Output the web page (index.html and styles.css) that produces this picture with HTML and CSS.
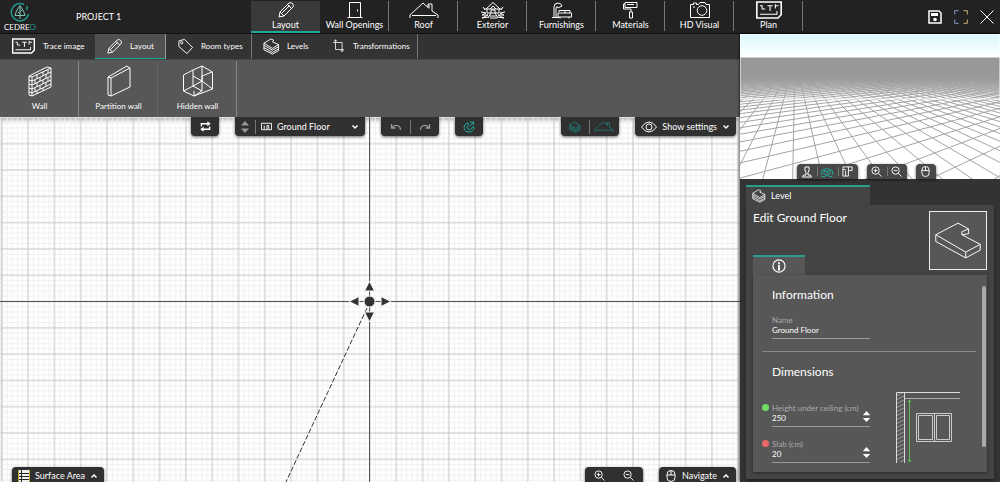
FILE: index.html
```html
<!DOCTYPE html>
<html lang="en">
<head>
<meta charset="utf-8">
<title>Project 1</title>
<link rel="stylesheet" href="styles.css">
</head>
<body>
<svg class="defs" aria-hidden="true">
  <symbol id="pencil" viewBox="0 0 18 18"><path d="M2 16l1-5L12 2q2-1 3.500 .5T16 6L7 15zM3 11l4 4M10.500 3.500l4 4M4.500 12.500l8-8"/></symbol>
  <symbol id="door" viewBox="0 0 18 18"><path d="M3.500 16.500v-15h11v15M1.500 16.500h15M11.500 8.500v2"/></symbol>
  <symbol id="roof" viewBox="0 0 30 18"><path d="M1 14L14 2l5 4.500V3h4v7l6 4M1 14v3M29 14v3M3 14.500h24M20 4v3.500"/></symbol>
  <symbol id="exterior" viewBox="0 0 26 18"><path d="M6 8L13 1.500 20 8M4 8h18M7 8v4h12V8M10 8l3-3 3 3M11 12V9h4v3M1 11l5 1-4 2 6 0-6 3 7-1M25 11l-5 1 4 2-6 0 6 3-7-1M11 12l-3 5M15 12l3 5M10 15h6M10 17h7M3 6l2 3M23 6l-2 3"/></symbol>
  <symbol id="lamp" viewBox="0 0 22 18"><path d="M1 16.500h7M3 16V6q0-4 4-4 3 0 4 3l-4 2q-1-3-2 0v9M8 11V9.500h11V12M7 12h13.500v4H7zM9 16v1.500M18 16v1.500M14 9.500V12"/></symbol>
  <symbol id="roller" viewBox="0 0 18 18"><path d="M3 1.500h12v5H3zM3 3H1.500v5H9v3M7.500 11h3v6h-3zM5 3.500h7"/></symbol>
  <symbol id="camera" viewBox="0 0 20 18"><path d="M.5 3.500h3V2h3v1.500h2L10 1.500h5l1 2h3.500v13H.5zM3 6h2"/><circle cx="12" cy="9.500" r="4.800"/></symbol>
  <symbol id="plan" viewBox="0 0 25 17"><path stroke-width="1.500" d="M1 1h23v12l-3 3H1z"/><path d="M4 4.500h2v3h3M4 12.500h16V9.500M11 4.500h5M13.500 4.500v5M18.500 3v4M21.500 4.500h-3"/></symbol>
  <symbol id="tag" viewBox="0 0 18 18"><path d="M2 3l6-1.500L16.500 10l-6 6.500L2 9z"/><circle cx="5" cy="5" r="1.200"/></symbol>
  <symbol id="levels" viewBox="0 0 18 18"><path d="M1 5.500L8.500 1l3 1.500L10 4l6.500 3L10 11zM1 5.500v7L10 17l6.500-3.500V7M1 7.800l9 5 6.500-3.500M1 10.200l9 5 6.500-3.500"/></symbol>
  <symbol id="crop" viewBox="0 0 18 18"><path d="M4.500 1v12.500H15M1.500 4.500H13V16M2.500 3l2-2 2 2M11 14.500l2 2 2-2"/></symbol>
  <symbol id="wall" viewBox="0 0 26 32"><path d="M2 11L20 2l4 1v19L5 31l-3-1zM2 11l3 1v19M5 12l19-9M5 16l19-9M5 20l19-9M5 24l19-9M5 28l19-9M2 15l3 1M2 19l3 1M2 23l3 1M2 27l3 1M10 10v4M16 7v4M21 5v3M8 15v4M13 12v4M19 9v4M10 18v4M16 15v4M21 13v3M8 23v4M13 20v4M19 17v4M10 26v3M16 23v3"/></symbol>
  <symbol id="partition" viewBox="0 0 26 32"><path d="M2 12L21 1l3 2v19L5 31l-3-1zM2 12l3 1v18M5 13L24 3"/></symbol>
  <symbol id="hidden" viewBox="0 0 32 32"><path d="M1.500 10L11 5v16l-9.500 5zM11 5l9-4 10.500 6v17L12 31M11 21l9-5V1M20 16l10.500 8M1.500 26L12 31V26M11 11l9 5M12 31l8-5V11l10-4M11 21l9 5"/></symbol>
  <symbol id="swap" viewBox="0 0 12 12"><path stroke-width="1.500" d="M1.500 6V3H10M8 1l2.500 2L8 5M10.500 6v3H2M4 7L1.500 9 4 11"/></symbol>
  <symbol id="floor" viewBox="0 0 12 8"><path d="M.5 7.500v-7h11v7zM3.500 7V3M6.500 7V3h2v4"/></symbol>
  <symbol id="down" viewBox="0 0 8 8"><path stroke-width="1.500" d="M1.500 2.500L4 5l2.500-2.500"/></symbol>
  <symbol id="up" viewBox="0 0 8 8"><path stroke-width="1.500" d="M1.500 5.500L4 3l2.500 2.500"/></symbol>
  <symbol id="undo" viewBox="0 0 12 10"><path stroke-width="1.300" d="M1.500 2v4h4M1.500 6q3-4 7-2 2 1 2 4"/></symbol>
  <symbol id="redo" viewBox="0 0 12 10"><path stroke-width="1.300" d="M10.500 2v4h-4M10.500 6q-3-4-7-2-2 1-2 4"/></symbol>
  <symbol id="magnet" viewBox="0 0 12 12"><path d="M5 1.500Q1 3 1 6.500 1.500 11 6 11q4.500 0 5-5M5.500 4Q3.500 5 4 7q1 2 3.500 1.200L9 6.500M5 1.500l.5 2.500M7 1h3.500v3M10.500 1L6.500 5.500M9 6h2"/></symbol>
  <symbol id="eye" viewBox="0 0 16 12"><path d="M.5 6Q4 1 8 1t7.500 5Q12 11 8 11T.5 6z"/><circle cx="8" cy="6" r="3"/></symbol>
  <symbol id="table" viewBox="0 0 12 12"><path fill="#eee" stroke="none" d="M0 0h12v12H0z"/><path stroke="#222" d="M3.500 0v12M0 3.500h12M0 6.500h12M0 9.500h12"/><path stroke="#c9a93c" d="M.5 0v12M11.500 0v12"/></symbol>
  <symbol id="zoomin" viewBox="0 0 12 12"><circle cx="5" cy="5" r="4"/><path d="M8 8l3.500 3.500M3 5h4M5 3v4"/></symbol>
  <symbol id="zoomout" viewBox="0 0 12 12"><circle cx="5" cy="5" r="4"/><path d="M8 8l3.500 3.500M3 5h4"/></symbol>
  <symbol id="mouse" viewBox="0 0 10 12"><rect x="1" y=".5" width="8" height="11" rx="4"/><path d="M1 5h8M5 1v4"/></symbol>
  <symbol id="person" viewBox="0 0 12 12"><path d="M4 1h4v4L7 6v3h2.500l1 2h-9l1-2H5V6L4 5z"/></symbol>
  <symbol id="orbit" viewBox="0 0 12 12"><path d="M3 4l3-2 3 2v4L6 10 3 8zM3 4l3 2 3-2M6 6v4M2 3L.5 5.500v3M10 3l1.500 2.500v3M.5 10.500H4M8 10.500h3.500"/></symbol>
  <symbol id="topview" viewBox="0 0 12 12"><path d="M1 1h10v4H7v6H4V5M1 1v10h3M7 1v4M1 4h3"/></symbol>
  <symbol id="save" viewBox="0 0 14 14"><path stroke-width="1.500" d="M1 1h10l2 2v10H1z"/><path fill="currentColor" stroke="none" d="M3 3h7v3H3z"/><circle cx="7" cy="9.500" r="1.800" fill="currentColor" stroke="none"/></symbol>
  <symbol id="full" viewBox="0 0 14 14"><path stroke="#8795c8" d="M.7 4.500V.7h3.800M.7 9.500v3.800h3.800"/><path stroke="#c8b576" d="M9.500 .7h3.800v3.800M9.500 13.300h3.800V9.500"/></symbol>
  <symbol id="close" viewBox="0 0 14 14"><path d="M.5 .5l13 13M13.500 .5l-13 13"/></symbol>
  <symbol id="info" viewBox="0 0 12 12"><circle cx="6" cy="6" r="5.200"/><path stroke-width="1.500" d="M6 5v4M6 2.800v1.400M5 9h2"/></symbol>
  <symbol id="updown" viewBox="0 0 8 12"><path fill="currentColor" stroke="none" d="M4 0l4 4.500H0zM0 7.500h8L4 12z"/></symbol>
</svg>

<div class="app">
  <header class="topbar">
    <div class="brand">
      <div class="logo">
        <svg class="logo-mark" viewBox="0 0 22 20"><path class="teal" d="M15 2.500A8.700 8.700 0 1 0 19.500 12M18 4v4"/><path class="pale" d="M11 3.500L7.500 9 6 13.500h10L14.500 9zM11 5v12M11 10l2-2M11 12L9 10"/></svg>
        <span class="logo-name">CEDRE<b>O</b></span>
      </div>
      <h1 class="project">PROJECT 1</h1>
    </div>
    <nav class="tabs">
      <button class="tab active"><svg><use href="#pencil"/></svg>Layout</button>
      <button class="tab"><svg><use href="#door"/></svg>Wall Openings</button>
      <button class="tab"><svg><use href="#roof"/></svg>Roof</button>
      <button class="tab"><svg><use href="#exterior"/></svg>Exterior</button>
      <button class="tab"><svg><use href="#lamp"/></svg>Furnishings</button>
      <button class="tab"><svg><use href="#roller"/></svg>Materials</button>
      <button class="tab"><svg><use href="#camera"/></svg>HD Visual</button>
      <button class="tab"><svg><use href="#plan"/></svg>Plan</button>
    </nav>
    <div class="window-actions">
      <button aria-label="Save"><svg><use href="#save"/></svg></button>
      <button aria-label="Full screen"><svg><use href="#full"/></svg></button>
      <button aria-label="Close"><svg><use href="#close"/></svg></button>
    </div>
  </header>

  <div class="workspace">
    <main class="editor">
      <nav class="subnav">
        <button class="sub first"><svg class="wide"><use href="#plan"/></svg>Trace image</button>
        <button class="sub active"><svg><use href="#pencil"/></svg>Layout</button>
        <button class="sub"><svg><use href="#tag"/></svg>Room types</button>
        <button class="sub"><svg><use href="#levels"/></svg>Levels</button>
        <button class="sub"><svg class="slim"><use href="#crop"/></svg>Transformations</button>
      </nav>
      <div class="tools">
        <button class="tool"><svg><use href="#wall"/></svg>Wall</button>
        <button class="tool"><svg><use href="#partition"/></svg>Partition wall</button>
        <button class="tool"><svg><use href="#hidden"/></svg>Hidden wall</button>
      </div>
      <section class="canvas">
        <svg class="grid" viewBox="0 0 740 365" preserveAspectRatio="xMidYMid slice">
          <defs>
            <pattern id="cells" x="370" y="184.500" width="26.300" height="26.300" patternUnits="userSpaceOnUse">
              <path stroke="#f0f0f0" d="M5.300 0v26.300M10.500 0v26.300M15.800 0v26.300M21 0v26.300M0 5.300h26.300M0 10.500h26.300M0 15.800h26.300M0 21h26.300"/>
              <path stroke="#c4c4c4" d="M0 0v26.300M26.300 0v26.300M0 0h26.300M0 26.300h26.300"/>
            </pattern>
          </defs>
          <rect width="740" height="365" fill="url(#cells)"/>
          <path stroke="#555" d="M369.500 0v365M0 184.500h740"/>
          <path stroke="#333" stroke-dasharray="5 2" d="M367 191L286 365"/>
          <g fill="#333"><circle cx="369.500" cy="184.500" r="5.500"/><path d="M369.500 164l5 10h-10zM369.500 205l5-10h-10zM349 184.500l10-5v10zM391 184.500l-10-5v10z"/></g>
        </svg>
        <div class="float-row top">
          <div class="float"><button class="w28" aria-label="Swap"><svg class="i11"><use href="#swap"/></svg></button></div>
          <div class="float floor">
            <button class="w20 dim" aria-label="Change floor"><svg class="i8"><use href="#updown"/></svg></button>
            <label class="floor-pick"><svg class="i11"><use href="#floor"/></svg>
              <select aria-label="Floor"><option>Ground Floor</option></select>
              <svg class="i8"><use href="#down"/></svg></label>
          </div>
          <div class="float"><button class="w29 dim" aria-label="Undo"><svg class="i12"><use href="#undo"/></svg></button><button class="w29 dim" aria-label="Redo"><svg class="i12"><use href="#redo"/></svg></button></div>
          <div class="float"><button class="w28 on" aria-label="Snap"><svg class="i12"><use href="#magnet"/></svg></button></div>
          <div class="float end"><button class="w28 on faint" aria-label="Show levels"><svg class="i12"><use href="#levels"/></svg></button><button class="w30 on faint" aria-label="Show roof"><svg class="i20"><use href="#roof"/></svg></button></div>
          <div class="float"><button class="label-btn"><svg class="i16"><use href="#eye"/></svg>Show settings<svg class="i8"><use href="#down"/></svg></button></div>
        </div>
        <div class="float-row bottom">
          <div class="float"><button class="label-btn"><svg class="i12"><use href="#table"/></svg>Surface Area<svg class="i8"><use href="#up"/></svg></button></div>
          <div class="float end plain"><button class="w29" aria-label="Zoom in"><svg class="i11"><use href="#zoomin"/></svg></button><button class="w29" aria-label="Zoom out"><svg class="i11"><use href="#zoomout"/></svg></button></div>
          <div class="float"><button class="label-btn tight"><svg class="i12"><use href="#mouse"/></svg>Navigate<svg class="i8"><use href="#up"/></svg></button></div>
        </div>
      </section>
    </main>

    <aside class="side">
      <section class="preview">
        <svg class="scene" viewBox="0 0 260 145" preserveAspectRatio="none">
          <defs>
            <linearGradient id="sky" x2="0" y2="1"><stop stop-color="#d9f8ff"/><stop offset="1" stop-color="#fff"/></linearGradient>
            <linearGradient id="haze" x2="0" y2="1"><stop stop-color="#989898"/><stop offset=".5" stop-color="#999"/><stop offset="1" stop-color="#bbb" stop-opacity="0"/></linearGradient>
          </defs>
          <rect width="260" height="145" fill="#fff"/>
          <rect width="260" height="23" fill="url(#sky)"/>
          <path id="ground" stroke="#a4a4a4" fill="none"/>
          <rect y="23" width="260" height="42" fill="url(#haze)"/>
        </svg>
        <div class="view-tools">
          <div class="float"><button class="w20" aria-label="Walk"><svg class="i12"><use href="#person"/></svg></button><button class="w21 on" aria-label="Orbit"><svg class="i12"><use href="#orbit"/></svg></button><button class="w20" aria-label="Top view"><svg class="i11"><use href="#topview"/></svg></button></div>
          <div class="float"><button class="w20" aria-label="Zoom in"><svg class="i11"><use href="#zoomin"/></svg></button><button class="w20" aria-label="Zoom out"><svg class="i11"><use href="#zoomout"/></svg></button></div>
          <div class="float"><button class="w20" aria-label="Mouse"><svg class="i11"><use href="#mouse"/></svg></button></div>
        </div>
      </section>
      <section class="props">
        <button class="props-tab"><svg class="i14"><use href="#levels"/></svg>Level</button>
        <div class="card">
          <div class="card-head">
            <div class="card-left">
              <h2>Edit Ground Floor</h2>
              <button class="info-tab" aria-label="Information"><svg class="i14"><use href="#info"/></svg></button>
            </div>
            <svg class="thumb" viewBox="0 0 58 58"><path d="M6 23L29 11l11 6v5l-7 1 19 10-15 8zM6 23v7l31 17 15-8v-6M37 41v6M40 17l-7 3v3"/></svg>
          </div>
          <div class="panel">
            <div class="fields">
              <h3>Information</h3>
              <div class="field"><label for="name">Name</label><input id="name" value="Ground Floor"></div>
              <hr>
              <h3>Dimensions</h3>
              <div class="dims">
                <div class="dim-list">
                  <div class="field green"><label for="h">Height under ceiling (cm)</label><div class="line"><input id="h" value="250"><button class="step" aria-label="Change height"><svg class="i11"><use href="#updown"/></svg></button></div></div>
                  <div class="field red"><label for="s">Slab (cm)</label><div class="line"><input id="s" value="20"><button class="step" aria-label="Change slab"><svg class="i11"><use href="#updown"/></svg></button></div></div>
                </div>
                <svg class="section" viewBox="0 0 65 71">
                  <defs><pattern id="hatch" width="8" height="4" patternUnits="userSpaceOnUse"><path stroke="#aaa" stroke-width=".8" d="M-1 4.500l10-5M-1 8.500l10-5M-1 .5l10-5"/></pattern></defs>
                  <rect x="1" y="1" width="8" height="69" fill="url(#hatch)" stroke="none"/>
                  <path stroke="#ddd" d="M.5 71V.5H64M8.500 1v70"/><path stroke="#aaa" d="M9 6.500h55"/>
                  <path stroke="#5dbb54" d="M13.500 8v62M12 10l1.500-2 1.500 2M12 68l1.500 2 1.500-2"/>
                  <path stroke="#ccc" d="M20.500 21.500h35v28h-35zM22.500 23.500h14v24h-14zM40.500 23.500h13v24h-13zM38.500 22v27"/>
                </svg>
              </div>
            </div>
            <span class="thumb-bar"></span>
          </div>
        </div>
      </section>
    </aside>
  </div>
</div>
<script src="scene.js"></script>
</body>
</html>
```

FILE: styles.css
```css
* { box-sizing: border-box; }
body {
  margin: 0;
  background: #333;
  color: #fff;
  font: 9px/14px Lato, "Open Sans", sans-serif;
}
button, input, select {
  font: inherit;
  color: inherit;
  background: none;
  border: 0;
  padding: 0;
  margin: 0;
}
button { cursor: pointer; }
svg { fill: none; stroke: currentColor; flex: none; display: block; }
.defs { position: absolute; width: 0; height: 0; }
.app { display: flex; flex-direction: column; height: 100vh; }

.topbar { display: flex; background: #222; border-bottom: 1px solid #111; height: 34px; }
.brand { display: flex; width: 251px; align-items: center; }
.logo { width: 40px; display: flex; flex-direction: column; align-items: center; }
.logo-mark { width: 22px; height: 20px; }
.logo-mark .teal { stroke: #1f9a8c; stroke-width: 1.5; }
.logo-mark .pale { stroke: #7fc4b6; }
.logo-name { font-size: 8px; line-height: 10px; }
.logo-name b { font-weight: 400; color: #1f9a8c; }
.project { margin: 0 0 0 36px; font-size: 9px; line-height: 14px; font-weight: 400; }
.tabs { display: flex; padding-top: 1px; }
.tab {
  width: 69px;
  display: flex;
  flex-direction: column;
  align-items: center;
  justify-content: space-between;
  white-space: nowrap;
  line-height: 12px;
  padding-bottom: 1px;
  border-bottom: 2px solid transparent;
  background: linear-gradient(#777, #777) right center / 1px 30px no-repeat;
}
.tab svg { width: 30px; height: 18px; }
.tab.active { background: #3a3a3a; border-color: #1fa99b; }
.window-actions { margin-left: auto; display: flex; gap: 12px; padding-right: 6px; align-items: center; }
.window-actions svg { width: 14px; height: 14px; }

.workspace { flex: 1; display: flex; min-height: 0; }
.editor { flex: 1; min-width: 0; display: flex; flex-direction: column; }
.subnav { display: flex; height: 25px; background: #333; }
.sub {
  display: flex;
  align-items: center;
  gap: 7px;
  width: 78px;
  padding: 0 11px;
  white-space: nowrap;
  font-size: 8px;
  border-bottom: 1px solid transparent;
}
.sub svg { width: 17px; height: 17px; }
.sub svg.wide { width: 25px; height: 16px; }
.sub svg.slim { width: 14px; height: 14px; }
.sub.first { width: 95px; }
.sub.active { width: 71px; background: #505050; border-color: #1fa99b; border-right: 1px solid #999; }
.sub:nth-child(n+3) { width: 86px; border-right: 1px solid #777; }
.sub:nth-child(4) { width: 69px; border-right: 0; }
.sub:nth-child(5) { width: 97px; }
.tools { display: flex; height: 58px; background: #575757; border-top: 1px solid #444; }
.tool {
  width: 79px;
  display: flex;
  flex-direction: column;
  align-items: center;
  padding-top: 5px;
  gap: 2px;
  font-size: 8px;
  background: linear-gradient(#888, #888) right center / 1px 56px no-repeat;
}
.tool:nth-child(2) { background: linear-gradient(#656565, #656565) right center / 1px 56px no-repeat; }
.tool svg { width: 32px; height: 32px; }

.canvas { flex: 1; position: relative; min-height: 0; background: #fff; overflow: hidden; box-shadow: inset 0 3px 4px #0005; }
.grid { width: 100%; height: 100%; }
.float-row { position: absolute; left: 0; right: 0; display: flex; gap: 16px; padding: 0 4px; }
.float-row.top { top: 0; padding-left: 191px; }
.float-row.bottom { bottom: 0; padding-left: 12px; }
.float {
  display: flex;
  height: 19px;
  background: #303030;
  border-radius: 0 0 4px 4px;
  box-shadow: 0 1px 3px #0009;
}
.float.end { margin-left: auto; }
.float button { display: flex; align-items: center; justify-content: center; }
.float button + button {
  background: linear-gradient(#777, #777) left center / 1px 14px no-repeat;
}
.float.plain button + button { background: none; }
.bottom .float { height: 15px; border-radius: 4px 4px 0 0; padding-top: 2px; }
.float .label-btn { gap: 5px; padding: 0 6px; white-space: nowrap; }
.floor { width: 130px; }
.floor-pick { flex: 1; display: flex; align-items: center; gap: 5px; padding: 0 6px; background: linear-gradient(#777, #777) left center / 1px 14px no-repeat; }
.floor-pick select { appearance: none; flex: 1; min-width: 0; }
.dim { color: #999; }
.on { color: #1fa99b; }
.faint { color: #1a8c80; }
.w20 { width: 20px; }
.w21 { width: 21px; }
.w28 { width: 28px; }
.w29 { width: 29px; }
.w30 { width: 30px; }
.i8 { width: 8px; height: 12px; }
.i11 { width: 11px; height: 11px; }
.i12 { width: 12px; height: 12px; }
.i14 { width: 14px; height: 14px; }
.i16 { width: 16px; height: 12px; }
.i20 { width: 20px; height: 13px; }

.side { width: 26%; min-width: 260px; display: flex; flex-direction: column; box-shadow: 0 0 3px #000; position: relative; }
.preview { position: relative; height: 145px; }
.scene { width: 100%; height: 100%; }
.view-tools { position: absolute; left: 0; right: 0; bottom: 0; display: flex; justify-content: center; gap: 9px; padding-right: 8px; }
.view-tools .float { height: 15px; background: #484848; border-radius: 4px 4px 0 0; }
.view-tools .float button + button { background-size: 1px 9px; }

.props { flex: 1; min-height: 0; display: flex; flex-direction: column; padding: 6px 6px 3px; background: #333; }
.props-tab {
  display: flex;
  align-items: center;
  gap: 5px;
  width: 124px;
  height: 20px;
  padding-left: 6px;
  background: #444;
  border-top: 2px solid #2a9d8f;
}
.card { flex: 1; min-height: 0; display: flex; flex-direction: column; padding: 6px 7px 7px; background: #444; box-shadow: 0 2px 3px #0006; }
.card-head { display: flex; justify-content: space-between; height: 64px; }
.card-left { display: flex; flex-direction: column; justify-content: space-between; }
h2 { margin: 0; font-size: 12px; line-height: 14px; font-weight: 400; }
.info-tab { width: 52px; height: 20px; display: flex; align-items: center; justify-content: center; background: #575757; border-top: 2px solid #2a9d8f; }
.thumb { width: 58px; height: 59px; background: #575757; border: 1px solid #eee; }
.panel { flex: 1; min-height: 0; display: flex; background: #575757; box-shadow: 0 1px 3px #0006; overflow: hidden; }
.fields { flex: 1; padding: 12px 0 0 19px; }
.thumb-bar { width: 4px; height: 161px; margin: 11px 1px 0 0; border-radius: 2px; background: #aaa; }
h3 { margin: 0 0 12px; font-size: 12px; line-height: 16px; font-weight: 400; }
.field { position: relative; width: 98px; border-bottom: 1px solid #999; font-size: 8px; line-height: 10px; padding-bottom: 3px; }
.field label { display: block; color: #aaa; white-space: nowrap; }
.field input { display: block; width: 100%; height: 10px; }
.line { display: flex; }
.line input { flex: 1; min-width: 0; }
.step { width: 8px; margin-top: -4px; display: flex; align-items: center; justify-content: center; }
hr { border: 0; border-top: 1px solid #888; margin: 12px 6px 12px -10px; }
.dims { display: flex; gap: 26px; }
.dim-list { display: flex; flex-direction: column; gap: 12px; padding-top: 11px; }
.green::before, .red::before { content: ""; position: absolute; left: -10px; top: 1px; width: 7px; height: 7px; border-radius: 50%; background: #6fdc62; }
.red::before { background: #ea6a6a; }
.section { width: 65px; height: 71px; }
```

FILE: scene.js
```js
// Floor grid: two families of lines, each meeting at its own point on the horizon.
const horizon = 23;
const base = 129;
const families = [
  { vanish: 55, start: 53, step: 26, from: -60, to: 90 },
  { vanish: 450, start: 0, step: 56, from: -60, to: 14 }
];
const parts = [];
for (const f of families) {
  for (let k = f.from; k <= f.to; k++) {
    const x = f.start + k * f.step;
    const dx = x - f.vanish;
    const dy = base - horizon;
    parts.push(`M${f.vanish + dx * 0.1} ${horizon + dy * 0.1}L${f.vanish + dx * 1.5} ${horizon + dy * 1.5}`);
  }
}
document.getElementById("ground").setAttribute("d", parts.join(""));
```
